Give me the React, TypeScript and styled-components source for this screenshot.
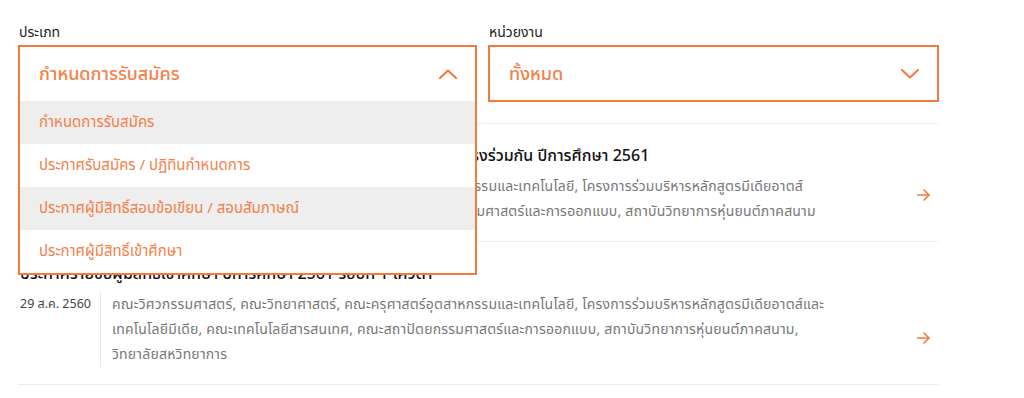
import React from "react";
import styled, { createGlobalStyle } from "styled-components";

const ORANGE = "#f47b3b";
const ORANGE_TEXT = "#f4804a";

const GlobalStyle = createGlobalStyle`
  * { box-sizing: border-box; }
  html, body { margin: 0; padding: 0; background: #ffffff; }
  body {
    font-family: "Noto Sans Thai", "Noto Sans", "DejaVu Sans", sans-serif;
    color: #222;
    -webkit-font-smoothing: antialiased;
  }
`;

const Page = styled.div`
  width: 1024px;
  height: 398px;
  overflow: hidden;
  padding: 23px 0 0 18px;
`;

const Container = styled.div`
  width: 921px;
`;

const Filters = styled.div`
  display: grid;
  grid-template-columns: 459px 451px;
  column-gap: 11px;
  position: relative;
  z-index: 2;
`;

const Field = styled.div`
  display: flex;
  flex-direction: column;
`;

const Label = styled.label`
  font-size: 14px;
  line-height: 20px;
  color: #222;
  margin: 0 0 2px 1px;
`;

const SelectWrap = styled.div`
  position: relative;
`;

const SelectBox = styled.div<{ $open?: boolean }>`
  height: ${(p) => (p.$open ? "56px" : "57px")};
  border: 2px solid ${ORANGE};
  border-bottom: ${(p) => (p.$open ? "none" : `2px solid ${ORANGE}`)};
  display: flex;
  align-items: center;
  justify-content: space-between;
  padding: 0 18px 0 19px;
  background: #fff;
`;

const SelectValue = styled.span`
  font-size: 18px;
  font-weight: 500;
  color: ${ORANGE_TEXT};
  line-height: 24px;
  margin-top: 2px;
`;

const Menu = styled.ul`
  position: absolute;
  top: 100%;
  left: 0;
  right: 0;
  margin: 0;
  padding: 0;
  list-style: none;
  background: #fff;
  border: 2px solid ${ORANGE};
  border-top: none;
`;

const MenuItem = styled.li<{ $shaded?: boolean }>`
  height: 43px;
  display: flex;
  align-items: center;
  padding-left: 19px;
  font-size: 15px;
  color: ${ORANGE_TEXT};
  background: ${(p) => (p.$shaded ? "#eeeeee" : "#ffffff")};
`;

const List = styled.div`
  margin-top: 21px;
  border-top: 1px solid #ececec;
  position: relative;
  z-index: 1;
`;

const Item = styled.div`
  display: flex;
  border-bottom: 1px solid #ececec;
  padding: 20px 9px 17px 2px;
`;

const ItemBody = styled.div`
  flex: 1;
  display: flex;
  flex-direction: column;
`;

const Title = styled.div`
  font-size: 16px;
  line-height: 24px;
  font-weight: 500;
  color: #111;
  white-space: nowrap;
`;

const Meta = styled.div`
  display: flex;
  margin-top: 6px;
`;

const DateCell = styled.div`
  width: 81px;
  flex: none;
  font-size: 12.5px;
  line-height: 25px;
  color: #444;
  white-space: nowrap;
  border-right: 1px solid #e8e8e8;
`;

const Desc = styled.div`
  padding-left: 11px;
  font-size: 14px;
  line-height: 25px;
  letter-spacing: 0.2px;
  color: #777;
`;

const DescLine = styled.div`
  white-space: nowrap;
`;

const ArrowCell = styled.div`
  align-self: flex-end;
  width: 13px;
  height: 12px;
  margin-bottom: 23px;
  display: flex;
`;

const Chevron = ({ up }: { up?: boolean }) => (
  <svg width="18" height="10" viewBox="0 0 18 10" fill="none">
    <polyline
      points={up ? "1,9 9,1.5 17,9" : "1,1 9,8.5 17,1"}
      stroke={ORANGE}
      strokeWidth="2"
      strokeLinecap="round"
      strokeLinejoin="round"
    />
  </svg>
);

const Arrow = () => (
  <svg width="13" height="12" viewBox="0 0 13 12" fill="none">
    <line x1="0.5" y1="6" x2="12" y2="6" stroke={ORANGE} strokeWidth="1.6" strokeLinecap="round" />
    <polyline points="7,1 12,6 7,11" stroke={ORANGE} strokeWidth="1.6" strokeLinecap="round" strokeLinejoin="round" />
  </svg>
);

const menuOptions = [
  "กำหนดการรับสมัคร",
  "ประกาศรับสมัคร / ปฏิทินกำหนดการ",
  "ประกาศผู้มีสิทธิ์สอบข้อเขียน / สอบสัมภาษณ์",
  "ประกาศผู้มีสิทธิ์เข้าศึกษา",
];

const items = [
  {
    title: "กำหนดการรับสมัครบุคคลเข้าศึกษาต่อระดับปริญญาตรี ระบบโควตารับตรงร่วมกัน ปีการศึกษา 2561",
    date: "31 ส.ค. 2560",
    lines: [
      "คณะวิศวกรรมศาสตร์, คณะวิทยาศาสตร์, คณะครุศาสตร์อุตสาหกรรมและเทคโนโลยี, โครงการร่วมบริหารหลักสูตรมีเดียอาตส์",
      "และเทคโนโลยีมีเดีย, คณะเทคโนโลยีสารสนเทศ, คณะสถาปัตยกรรมศาสตร์และการออกแบบ, สถาบันวิทยาการหุ่นยนต์ภาคสนาม",
    ],
  },
  {
    title: "ประกาศรายชื่อผู้มีสิทธิ์เข้าศึกษา ปีการศึกษา 2561 รอบที่ 1 โควตา",
    date: "29 ส.ค. 2560",
    lines: [
      "คณะวิศวกรรมศาสตร์, คณะวิทยาศาสตร์, คณะครุศาสตร์อุตสาหกรรมและเทคโนโลยี, โครงการร่วมบริหารหลักสูตรมีเดียอาตส์และ",
      "เทคโนโลยีมีเดีย, คณะเทคโนโลยีสารสนเทศ, คณะสถาปัตยกรรมศาสตร์และการออกแบบ, สถาบันวิทยาการหุ่นยนต์ภาคสนาม,",
      "วิทยาลัยสหวิทยาการ",
    ],
  },
];

export default function App() {
  return (
    <>
      <GlobalStyle />
      <Page>
        <Container>
          <Filters>
            <Field>
              <Label>ประเภท</Label>
              <SelectWrap>
                <SelectBox $open>
                  <SelectValue>กำหนดการรับสมัคร</SelectValue>
                  <Chevron up />
                </SelectBox>
                <Menu>
                  {menuOptions.map((o, i) => (
                    <MenuItem key={o} $shaded={i % 2 === 0}>
                      {o}
                    </MenuItem>
                  ))}
                </Menu>
              </SelectWrap>
            </Field>
            <Field>
              <Label>หน่วยงาน</Label>
              <SelectWrap>
                <SelectBox>
                  <SelectValue>ทั้งหมด</SelectValue>
                  <Chevron />
                </SelectBox>
              </SelectWrap>
            </Field>
          </Filters>
          <List>
            {items.map((it) => (
              <Item key={it.date}>
                <ItemBody>
                  <Title>{it.title}</Title>
                  <Meta>
                    <DateCell>{it.date}</DateCell>
                    <Desc>
                      {it.lines.map((l) => (
                        <DescLine key={l}>{l}</DescLine>
                      ))}
                    </Desc>
                  </Meta>
                </ItemBody>
                <ArrowCell>
                  <Arrow />
                </ArrowCell>
              </Item>
            ))}
          </List>
        </Container>
      </Page>
    </>
  );
}
